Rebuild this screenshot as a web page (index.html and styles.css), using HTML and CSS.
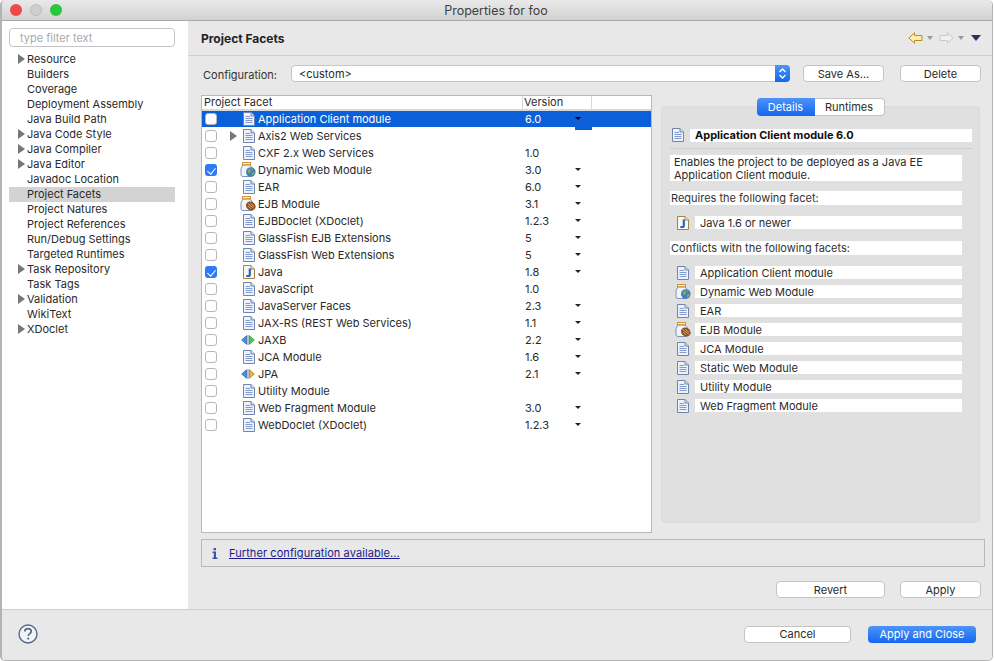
FILE: index.html
```html
<!DOCTYPE html>
<html lang="en">
<head>
<meta charset="utf-8">
<title>Properties for foo</title>
<link rel="stylesheet" href="styles.css">
</head>
<body>
<svg class="defs" width="0" height="0" aria-hidden="true">
  <defs>
    <symbol id="doc" viewBox="0 0 12 14">
      <path d="M.5.5H8L11.5 4V13.5H.5Z" fill="#eef2fb" stroke="#7184ad"/>
      <path d="M8 .5V4H11.5" fill="#d5ddf0" stroke="#7184ad"/>
      <path d="M2.5 4.500H7M2.500 6.500H9.500M2.500 8.500H9.500M2.500 10.500H9.500" stroke="#7f9bd0" fill="none"/>
    </symbol>
    <symbol id="jar-web" viewBox="0 0 16 15">
      <path d="M3 3H10L12.500 6V13Q12.500 14.500 11 14.500H3Q1 14.500 1 12.500V6.500Z" fill="#eef4fa" stroke="#7d93b5"/>
      <rect x="2.500" y=".5" width="8" height="2.200" fill="#fbeecb" stroke="#d0953a"/>
      <circle cx="10.800" cy="10" r="4.800" fill="#3f7ec4"/>
      <path d="M7.500 8L10 6.200L11.500 8.500L9.500 11.500L8 10.500Z M12 10.500L15 9.500L14 12.500L12 13.500Z" fill="#7cab5a"/>
      <path d="M11.500 6L13.500 7L12.500 8Z" fill="#c9a24e"/>
    </symbol>
    <symbol id="jar-ejb" viewBox="0 0 16 15">
      <path d="M3 3H10L12.500 6V13Q12.500 14.500 11 14.500H3Q1 14.500 1 12.500V6.500Z" fill="#eef4fa" stroke="#7d93b5"/>
      <rect x="2.500" y=".5" width="8" height="2.200" fill="#fbeecb" stroke="#d0953a"/>
      <ellipse cx="10.800" cy="10" rx="5" ry="4.300" fill="#8f4f22" transform="rotate(35 10.800 10)"/>
      <path d="M7.800 7.500L13.800 12.300M8 10L11 12.800M10.500 7.500L14 10.200" stroke="#e3b27f" stroke-width=".9" fill="none"/>
    </symbol>
    <symbol id="java" viewBox="0 0 12 14">
      <path d="M.5.5H8L11.500 4V13.500H.5Z" fill="#faf7ee" stroke="#a5824c"/>
      <path d="M8 .5V4H11.500" fill="#efe4cb" stroke="#a5824c"/>
      <path d="M6.800 3.500V9.400Q6.800 11 5.300 11H3.300" stroke="#2466c0" stroke-width="2.200" fill="none"/>
    </symbol>
    <symbol id="jaxb" viewBox="0 0 14 10">
      <path d="M5.500 .8V9.200L.7 5Z" fill="#4a90d9" stroke="#2f6bb0" stroke-width=".8"/>
      <path d="M8.500 .8V9.200L13.300 5Z" fill="#3ecf55" stroke="#2d9a3a" stroke-width=".8"/>
      <path d="M7 0V10" stroke="#55636f" stroke-width=".8"/>
    </symbol>
    <symbol id="jpa" viewBox="0 0 14 10">
      <path d="M5.500 .8V9.200L.7 5Z" fill="#4a90d9" stroke="#2f6bb0" stroke-width=".8"/>
      <path d="M8.500 .8V9.200L13.300 5Z" fill="#eeb04e" stroke="#b67f28" stroke-width=".8"/>
      <path d="M7 0V10" stroke="#55636f" stroke-width=".8"/>
    </symbol>
  </defs>
</svg>
<div class="window">
  <header class="titlebar">
    <span class="light red"></span><span class="light gray"></span><span class="light green"></span>
    <span class="title">Properties for foo</span>
  </header>
  <div class="main">
    <aside class="sidebar">
      <div class="filter">type filter text</div>
      <ul class="tree">
        <li class="has">Resource</li>
        <li>Builders</li>
        <li>Coverage</li>
        <li>Deployment Assembly</li>
        <li>Java Build Path</li>
        <li class="has">Java Code Style</li>
        <li class="has">Java Compiler</li>
        <li class="has">Java Editor</li>
        <li>Javadoc Location</li>
        <li class="current">Project Facets</li>
        <li>Project Natures</li>
        <li>Project References</li>
        <li>Run/Debug Settings</li>
        <li>Targeted Runtimes</li>
        <li class="has">Task Repository</li>
        <li>Task Tags</li>
        <li class="has">Validation</li>
        <li>WikiText</li>
        <li class="has">XDoclet</li>
      </ul>
    </aside>
    <section class="content">
      <div class="heading">
        <h1>Project Facets</h1>
        <div class="nav">
          <svg class="nav-arrow" viewBox="0 0 15 12"><path d="M6.500 .8L.8 6L6.500 11.200V8.500H14V3.500H6.500Z" fill="#fdeeb0" stroke="#c08a1e"/></svg>
          <span class="mini"></span>
          <svg class="nav-arrow" viewBox="0 0 15 12"><path d="M8.500 .8L14.200 6L8.500 11.200V8.500H1V3.500H8.500Z" fill="#f0f0f0" stroke="#c9c9c9"/></svg>
          <span class="mini"></span>
          <span class="menu"></span>
        </div>
      </div>
      <div class="config">
        <label class="config-label">Configuration:</label>
        <div class="select"><span>&lt;custom&gt;</span><span class="select-btn"><svg width="9" height="13" viewBox="0 0 9 13"><path d="M1.500 5L4.500 2L7.500 5M1.500 8L4.500 11L7.500 8" fill="none" stroke="#fff" stroke-width="1.300"/></svg></span></div>
        <button class="btn save">Save As...</button>
        <button class="btn delete">Delete</button>
      </div>
      <div class="columns">
        <div class="table">
          <div class="thead"><span class="th-name">Project Facet</span><span class="th-ver">Version</span><span class="th-rest"></span></div>
          <div class="row selected"><span class="check"></span><span class="twisty"></span><svg class="ic"><use href="#doc"/></svg><span class="name">Application Client module</span><span class="ver">6.0</span><span class="drop cell"></span></div>
          <div class="row"><span class="check"></span><span class="twisty on"></span><svg class="ic"><use href="#doc"/></svg><span class="name">Axis2 Web Services</span><span class="ver"></span></div>
          <div class="row"><span class="check"></span><span class="twisty"></span><svg class="ic"><use href="#doc"/></svg><span class="name">CXF 2.x Web Services</span><span class="ver">1.0</span></div>
          <div class="row"><span class="check checked"></span><span class="twisty"></span><svg class="ic wide"><use href="#jar-web"/></svg><span class="name">Dynamic Web Module</span><span class="ver">3.0</span><span class="drop"></span></div>
          <div class="row"><span class="check"></span><span class="twisty"></span><svg class="ic"><use href="#doc"/></svg><span class="name">EAR</span><span class="ver">6.0</span><span class="drop"></span></div>
          <div class="row"><span class="check"></span><span class="twisty"></span><svg class="ic wide"><use href="#jar-ejb"/></svg><span class="name">EJB Module</span><span class="ver">3.1</span><span class="drop"></span></div>
          <div class="row"><span class="check"></span><span class="twisty"></span><svg class="ic"><use href="#doc"/></svg><span class="name">EJBDoclet (XDoclet)</span><span class="ver">1.2.3</span><span class="drop"></span></div>
          <div class="row"><span class="check"></span><span class="twisty"></span><svg class="ic"><use href="#doc"/></svg><span class="name">GlassFish EJB Extensions</span><span class="ver">5</span><span class="drop"></span></div>
          <div class="row"><span class="check"></span><span class="twisty"></span><svg class="ic"><use href="#doc"/></svg><span class="name">GlassFish Web Extensions</span><span class="ver">5</span><span class="drop"></span></div>
          <div class="row"><span class="check checked"></span><span class="twisty"></span><svg class="ic"><use href="#java"/></svg><span class="name">Java</span><span class="ver">1.8</span><span class="drop"></span></div>
          <div class="row"><span class="check"></span><span class="twisty"></span><svg class="ic"><use href="#doc"/></svg><span class="name">JavaScript</span><span class="ver">1.0</span></div>
          <div class="row"><span class="check"></span><span class="twisty"></span><svg class="ic"><use href="#doc"/></svg><span class="name">JavaServer Faces</span><span class="ver">2.3</span><span class="drop"></span></div>
          <div class="row"><span class="check"></span><span class="twisty"></span><svg class="ic"><use href="#doc"/></svg><span class="name">JAX-RS (REST Web Services)</span><span class="ver">1.1</span><span class="drop"></span></div>
          <div class="row"><span class="check"></span><span class="twisty"></span><svg class="ic wide arrows"><use href="#jaxb"/></svg><span class="name">JAXB</span><span class="ver">2.2</span><span class="drop"></span></div>
          <div class="row"><span class="check"></span><span class="twisty"></span><svg class="ic"><use href="#doc"/></svg><span class="name">JCA Module</span><span class="ver">1.6</span><span class="drop"></span></div>
          <div class="row"><span class="check"></span><span class="twisty"></span><svg class="ic wide arrows"><use href="#jpa"/></svg><span class="name">JPA</span><span class="ver">2.1</span><span class="drop"></span></div>
          <div class="row"><span class="check"></span><span class="twisty"></span><svg class="ic"><use href="#doc"/></svg><span class="name">Utility Module</span><span class="ver"></span></div>
          <div class="row"><span class="check"></span><span class="twisty"></span><svg class="ic"><use href="#doc"/></svg><span class="name">Web Fragment Module</span><span class="ver">3.0</span><span class="drop"></span></div>
          <div class="row"><span class="check"></span><span class="twisty"></span><svg class="ic"><use href="#doc"/></svg><span class="name">WebDoclet (XDoclet)</span><span class="ver">1.2.3</span><span class="drop"></span></div>
        </div>
        <div class="side">
          <div class="tabs"><span class="tab active">Details</span><span class="tab">Runtimes</span></div>
          <div class="panel">
            <div class="panel-title"><svg class="ic"><use href="#doc"/></svg><strong class="strip">Application Client module 6.0</strong></div>
            <div class="rule"></div>
            <p class="block desc">Enables the project to be deployed as a Java EE<br>Application Client module.</p>
            <p class="block label req">Requires the following facet:</p>
            <div class="item first"><svg class="ic"><use href="#java"/></svg><span class="strip">Java 1.6 or newer</span></div>
            <p class="block label con">Conflicts with the following facets:</p>
            <div class="item first"><svg class="ic"><use href="#doc"/></svg><span class="strip">Application Client module</span></div>
            <div class="item"><svg class="ic wide"><use href="#jar-web"/></svg><span class="strip">Dynamic Web Module</span></div>
            <div class="item"><svg class="ic"><use href="#doc"/></svg><span class="strip">EAR</span></div>
            <div class="item"><svg class="ic wide"><use href="#jar-ejb"/></svg><span class="strip">EJB Module</span></div>
            <div class="item"><svg class="ic"><use href="#doc"/></svg><span class="strip">JCA Module</span></div>
            <div class="item"><svg class="ic"><use href="#doc"/></svg><span class="strip">Static Web Module</span></div>
            <div class="item"><svg class="ic"><use href="#doc"/></svg><span class="strip">Utility Module</span></div>
            <div class="item"><svg class="ic"><use href="#doc"/></svg><span class="strip">Web Fragment Module</span></div>
          </div>
        </div>
      </div>
      <div class="info">
        <svg class="info-ic" viewBox="0 0 6 11"><path d="M1.500 0H4V2.200H1.500ZM.5 3.500H4V9.500H5.500V11H.5V9.500H1.800V5H.5Z" fill="#3a55a0"/></svg>
        <a class="link" href="#">Further configuration available...</a>
      </div>
      <div class="actions">
        <button class="btn revert">Revert</button>
        <button class="btn apply">Apply</button>
      </div>
    </section>
  </div>
  <footer class="footer">
    <svg class="help" viewBox="0 0 20 20"><circle cx="10" cy="10" r="9" fill="#f2f3f6" stroke="#54688c" stroke-width="1.400"/><path d="M6.800 7.600C6.800 5.700 8.200 4.700 10 4.700C11.900 4.700 13.200 5.800 13.200 7.400C13.200 9.700 10.300 9.700 10.300 12" fill="none" stroke="#54688c" stroke-width="1.700"/><circle cx="10.200" cy="14.600" r="1.100" fill="#54688c"/></svg>
    <button class="btn cancel">Cancel</button>
    <button class="btn primary">Apply and Close</button>
  </footer>
</div>
</body>
</html>
```

FILE: styles.css
```css
* { box-sizing: border-box; }
html, body { margin: 0; padding: 0; }
body {
  width: 994px;
  height: 661px;
  overflow: hidden;
  background: #fff;
  font-family: Inter, "Liberation Sans", sans-serif;
  font-size: 11px;
  color: #2a2a2a;
}
.defs { position: absolute; }
.window {
  width: 993px;
  height: 661px;
  border: 1px solid #b4b4b4;
  border-left-width: 2px;
  border-top: 0;
  border-radius: 5px;
  background: #e8e8e8;
  display: flex;
  flex-direction: column;
  overflow: hidden;
}
.titlebar {
  height: 21px;
  flex: none;
  display: flex;
  align-items: center;
  padding-left: 8px;
  gap: 8px;
  background: linear-gradient(#e9e9e9, #d2d2d2);
  border-bottom: 1px solid #a8a8a8;
  position: relative;
}
.light { width: 12px; height: 12px; border-radius: 50%; }
.red { background: #f0494a; }
.gray { background: #cfcfcf; border: 1px solid #bdbdbd; }
.green { background: #2bc640; }
.title {
  position: absolute;
  left: -2px;
  right: 0;
  text-align: center;
  font-size: 12.5px;
  color: #3f3f3f;
}
.main { flex: 1; display: flex; min-height: 0; }
.sidebar { width: 186px; flex: none; background: #fff; padding: 7px 13px 0 7px; }
.filter {
  height: 19px;
  line-height: 18px;
  padding-left: 10px;
  border: 1px solid #c4c4c4;
  border-radius: 4px;
  color: #a9a9a9;
  margin-bottom: 5px;
}
.tree { list-style: none; margin: 0; padding: 0; }
.tree li { height: 15px; line-height: 15px; padding-left: 18px; position: relative; white-space: nowrap; }
.tree li.has::before {
  content: "";
  position: absolute;
  left: 9px;
  top: 2px;
  border-style: solid;
  border-width: 5px 0 5px 7px;
  border-color: transparent transparent transparent #777;
}
.tree li.current { background: #d3d3d3; }
.content { flex: 1; min-width: 0; }
.heading {
  height: 35px;
  display: flex;
  align-items: center;
  justify-content: space-between;
  padding: 0 11px 0 13px;
  border-bottom: 1px solid #d0d0d0;
}
h1 { margin: 0; font-size: 12px; font-weight: 700; color: #222; }
.nav { display: flex; align-items: center; }
.nav-arrow { width: 15px; height: 12px; }
.mini {
  margin: 0 6px 0 4px;
  border-style: solid;
  border-width: 4px 3px 0;
  border-color: #999 transparent transparent;
}
.menu {
  margin-left: 1px;
  border-style: solid;
  border-width: 6px 5px 0;
  border-color: #3b2a66 transparent transparent;
}
.config {
  display: flex;
  align-items: center;
  height: 17px;
  margin: 9px 0 13px;
  padding-left: 15px;
}
.config-label { width: 88px; flex: none; color: #333; padding-top: 2px; }
.select {
  width: 499px;
  height: 17px;
  flex: none;
  display: flex;
  justify-content: space-between;
  align-items: center;
  padding-left: 7px;
  background: #fff;
  border: 1px solid #c6c6c6;
  border-radius: 4px;
  position: relative;
}
.select-btn {
  position: absolute;
  right: -1px;
  top: -1px;
  width: 15px;
  height: 17px;
  display: flex;
  align-items: center;
  justify-content: center;
  border-radius: 0 4px 4px 0;
  background: linear-gradient(#4d94f8, #1467ee);
}
.btn {
  height: 17px;
  padding: 0;
  font: inherit;
  color: #2a2a2a;
  background: #fff;
  border: 1px solid #c4c4c4;
  border-radius: 4px;
}
.save { width: 81px; margin-left: 13px; }
.delete { width: 81px; margin-left: 16px; }
.columns { display: flex; padding-left: 13px; }
.table { width: 451px; height: 438px; flex: none; background: #fff; border: 1px solid #b9b9b9; }
.thead { display: flex; height: 14px; line-height: 13px; background: #fff; border-bottom: 1px solid #d8d8d8; }
.th-name { width: 320px; padding-left: 2px; }
.th-ver { width: 70px; padding-left: 1px; border-left: 1px solid #d8d8d8; border-right: 1px solid #d8d8d8; }
.row { display: flex; align-items: center; height: 17px; position: relative; }
.row.selected { background: #0b5fd9; color: #fff; box-shadow: inset 0 1px 0 #d8d8d8; }
.check {
  width: 12px;
  height: 12px;
  margin-left: 3px;
  flex: none;
  background: #fff;
  border: 1px solid #b8b8b8;
  border-radius: 3px;
}
.check.checked {
  border: 0;
  background: #2f7bf5;
  position: relative;
}
.check.checked::after {
  content: "";
  position: absolute;
  left: 4px;
  top: 2px;
  width: 4px;
  height: 7px;
  border: solid #fff;
  border-width: 0 1.500px 1.500px 0;
  transform: rotate(40deg);
}
.twisty { width: 8px; height: 10px; margin: 0 5px 0 13px; flex: none; }
.twisty.on {
  width: 0;
  height: 0;
  margin-right: 6px;
  border-style: solid;
  border-width: 5px 0 5px 7px;
  border-color: transparent transparent transparent #777;
}
.ic { width: 12px; height: 14px; flex: none; }
.ic.wide { width: 16px; height: 15px; margin-left: -3px; margin-right: -1px; }
.ic.wide.arrows { width: 14px; height: 10px; margin-left: -2px; margin-right: 0; }
.name { width: 264px; padding-left: 3px; flex: none; white-space: nowrap; }
.ver { width: 50px; flex: none; padding-left: 6px; }
.drop {
  width: 0;
  height: 0;
  border-style: solid;
  border-width: 3.500px 3px 0;
  border-color: #222 transparent transparent;
  flex: none;
  margin-left: 6px;
}
.drop.cell {
  border-color: #000 transparent transparent;
  position: relative;
}
.drop.cell::after {
  content: "";
  position: absolute;
  left: -3px;
  top: 5px;
  width: 17px;
  height: 5px;
  background: #0b5fd9;
}
.side { width: 319px; margin-left: 9px; flex: none; }
.tabs { display: flex; justify-content: center; position: relative; height: 18px; margin: 3px 0 0; z-index: 1; }
.tab {
  width: 70px;
  height: 18px;
  line-height: 16px;
  text-align: center;
  background: #fff;
  border: 1px solid #c4c4c4;
  border-left: 0;
  border-radius: 0 4px 4px 0;
}
.tab.active {
  width: 58px;
  color: #fff;
  border: 0;
  line-height: 18px;
  border-radius: 4px 0 0 4px;
  background: linear-gradient(#4d94f8, #1467ee);
}
.panel {
  height: 417px;
  margin-top: -10px;
  padding: 21px 17px 0 8px;
  background: #e0e0e0;
  border: 1px solid #dadada;
  border-radius: 4px;
}
.panel-title { display: flex; align-items: center; height: 14px; padding-left: 2px; margin-right: -10px; }
.panel-title .strip { margin-left: 6px; flex: 1; font-weight: 700; padding-left: 5px; height: 13px; line-height: 13px; background: #fff; color: #111; }
.rule { height: 1px; margin: 6px -10px 6px 0; background: #cdcdcd; }
.block { margin: 0; padding: 0 4px; background: #fff; line-height: 13px; }
.desc { height: 26px; padding-top: 1px; }
.label { height: 14px; line-height: 14px; color: #333; padding-left: 1px; }
.req { margin-top: 10px; }
.con { margin-top: 12px; }
.item { display: flex; align-items: center; height: 13px; margin: 6px 0 0 -1px; padding-left: 8px; }
.item.first { margin-top: 11px; }
.item .ic { margin-right: 6px; }
.item .ic.wide { margin-left: -2px; margin-right: 4px; }
.item .strip { flex: 1; height: 13px; line-height: 15px; background: #fff; padding-left: 5px; overflow: hidden; }
.info {
  display: flex;
  align-items: center;
  width: 784px;
  height: 28px;
  margin: 6px 0 0 13px;
  border: 1px solid #b9b9b9;
  padding-left: 10px;
}
.info-ic { width: 6px; height: 11px; flex: none; }
.link { margin-left: 11px; color: #1a1a8c; text-decoration: underline; letter-spacing: .08px; }
.actions { display: flex; height: 17px; margin-top: 14px; padding-left: 588px; }
.revert { width: 109px; }
.apply { width: 81px; margin-left: 15px; }
.footer {
  height: 51px;
  flex: none;
  display: flex;
  align-items: center;
  padding: 0 16px 2px;
  border-top: 1px solid #cfcfcf;
  background: #e8e8e8;
}
.help { width: 20px; height: 20px; margin-right: auto; }
.cancel { width: 107px; }
.primary {
  width: 108px;
  margin-left: 17px;
  color: #fff;
  border: 0;
  background: linear-gradient(#4d94f8, #1467ee);
}
```
